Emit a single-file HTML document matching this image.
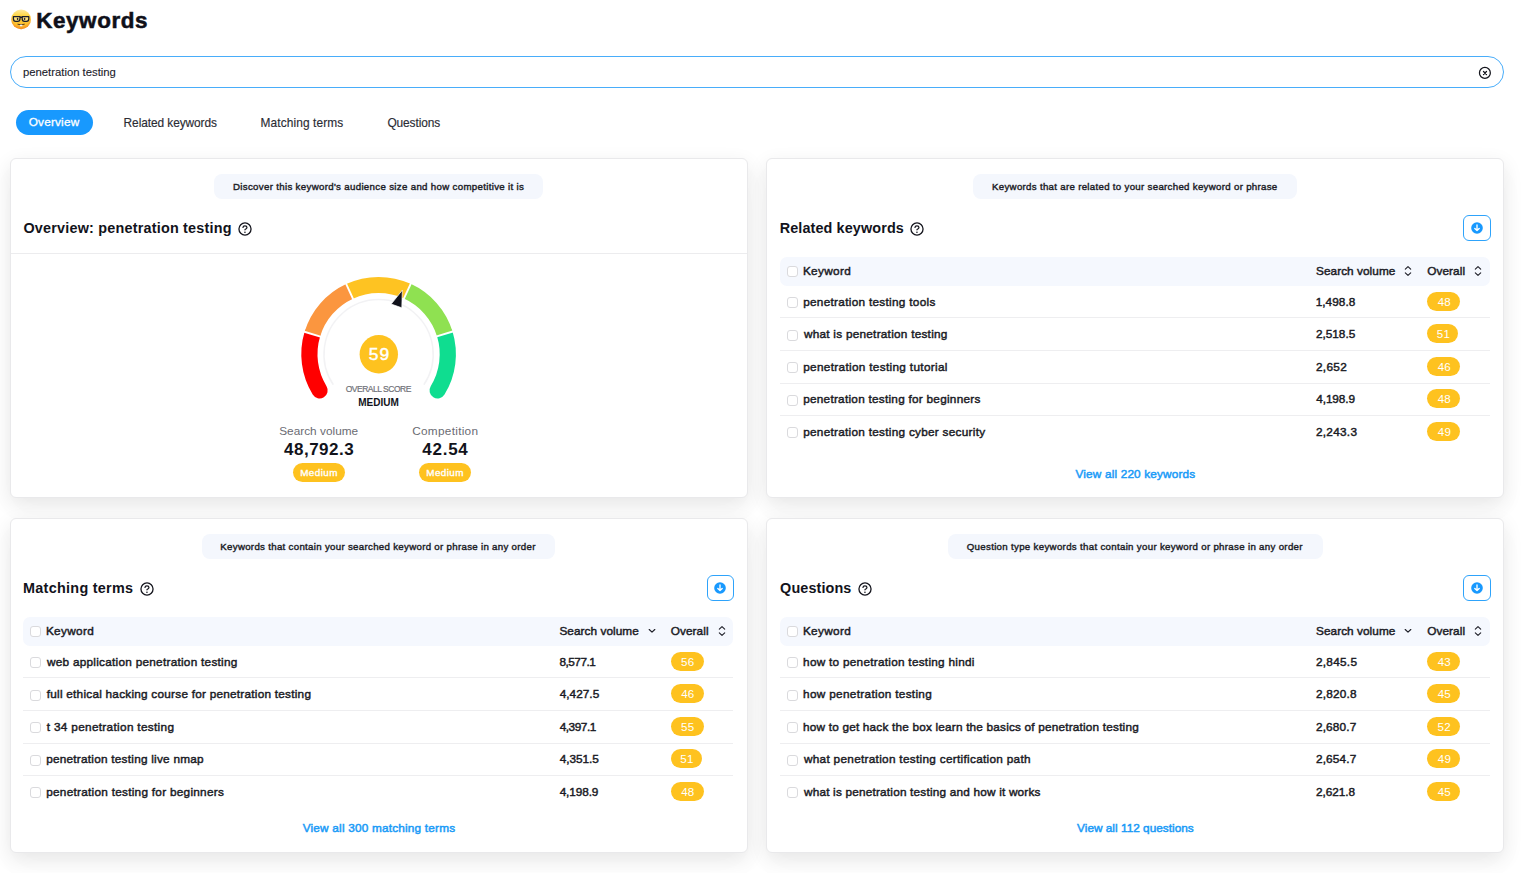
<!DOCTYPE html>
<html><head><meta charset="utf-8"><title>Keywords</title>
<style>
html,body{margin:0;padding:0;}
body{width:1536px;height:873px;overflow:hidden;background:#fff;position:relative;font-family:"Liberation Sans", sans-serif;}
.t{position:absolute;white-space:nowrap;}
.r{position:absolute;}
</style></head><body>
<svg class="r" style="left:9px;top:7px" width="24" height="24" viewBox="0 0 24 24">
<defs><linearGradient id="eg" x1="0" y1="0" x2="0" y2="1"><stop offset="0" stop-color="#ffeaa0"/><stop offset="0.3" stop-color="#ffd646"/><stop offset="0.75" stop-color="#fdbf2c"/><stop offset="1" stop-color="#f8a023"/></linearGradient>
<radialGradient id="eg2" cx="0.5" cy="0.4" r="0.6"><stop offset="0.72" stop-color="#f79a25" stop-opacity="0"/><stop offset="1" stop-color="#f4891f" stop-opacity="1"/></radialGradient></defs>
<circle cx="12.1" cy="12.4" r="9.8" fill="url(#eg)"/>
<circle cx="12.1" cy="12.4" r="9.8" fill="url(#eg2)"/>
<path d="M4.4 9.7 H11 V11.4 Q11 14.3 8.7 14.3 H6.7 Q4.4 14.3 4.4 11.4 Z M13.2 9.7 H19.8 V11.4 Q19.8 14.3 17.5 14.3 H15.5 Q13.2 14.3 13.2 11.4 Z" fill="#ffe27a" stroke="#1c1d2b" stroke-width="1.25" stroke-linejoin="round"/>
<path d="M11 10.3 H13.2" stroke="#1c1d2b" stroke-width="1.4"/>
<ellipse cx="8.6" cy="12" rx="0.8" ry="1.15" fill="#2d2a3a"/><ellipse cx="15.6" cy="12" rx="0.8" ry="1.15" fill="#2d2a3a"/>
<path d="M8.9 17.3 Q12.1 18.5 15.3 17.3" fill="none" stroke="#3d2a1c" stroke-width="0.9" stroke-linecap="round"/>
<rect x="10.9" y="17.8" width="2.5" height="1.5" rx="0.3" fill="#f2f3f6"/>
</svg>
<div class="t" style="left:36.16px;top:10.00px;font-size:22.4px;line-height:22.4px;color:#0f1019;font-weight:bold;letter-spacing:0.620px;-webkit-text-stroke:0.55px #0f1019;">Keywords</div>
<div class="r" style="left:10px;top:56.2px;width:1494px;height:31.6px;box-sizing:border-box;border:1.5px solid #49adfa;border-radius:16px;background:#fff;"></div>
<div class="t" style="left:23.02px;top:67.00px;font-size:11.3px;line-height:11.3px;color:#20212a;letter-spacing:-0.007px;-webkit-text-stroke:0.1px #20212a;">penetration testing</div>
<svg class="r" style="left:1477px;top:65px" width="16" height="16" viewBox="0 0 16 16">
<circle cx="7.9" cy="7.9" r="5.45" fill="none" stroke="#14151d" stroke-width="1.25"/>
<path d="M6.5 6.5 L9.5 9.5 M9.5 6.5 L6.5 9.5" stroke="#14151d" stroke-width="1.3" stroke-linecap="round"/><circle cx="8" cy="8" r="0.9" fill="#14151d"/></svg>
<div class="r" style="left:16.1px;top:109.8px;width:76.6px;height:25.7px;background:#1899fe;border-radius:13px;"></div>
<div class="t" style="left:28.69px;top:117.00px;font-size:11.8px;line-height:11.8px;color:#ffffff;letter-spacing:0.194px;-webkit-text-stroke:0.3px #ffffff;">Overview</div>
<div class="t" style="left:123.59px;top:118.00px;font-size:11.9px;line-height:11.9px;color:#2b2c34;letter-spacing:-0.075px;-webkit-text-stroke:0.15px #2b2c34;">Related keywords</div>
<div class="t" style="left:260.59px;top:118.00px;font-size:11.9px;line-height:11.9px;color:#2b2c34;letter-spacing:0.101px;-webkit-text-stroke:0.15px #2b2c34;">Matching terms</div>
<div class="t" style="left:387.41px;top:118.00px;font-size:11.9px;line-height:11.9px;color:#2b2c34;letter-spacing:-0.093px;-webkit-text-stroke:0.15px #2b2c34;">Questions</div>
<div class="r" style="left:10px;top:157.5px;width:738px;height:340.5px;box-sizing:border-box;border:1px solid #e9e9eb;border-radius:6px;background:#fff;box-shadow:0 6px 20px rgba(0,0,0,0.09), 0 14px 36px rgba(0,0,0,0.02);"></div>
<div class="r" style="left:766px;top:157.5px;width:738px;height:340.5px;box-sizing:border-box;border:1px solid #e9e9eb;border-radius:6px;background:#fff;box-shadow:0 6px 20px rgba(0,0,0,0.09), 0 14px 36px rgba(0,0,0,0.02);"></div>
<div class="r" style="left:10px;top:518px;width:738px;height:334.5px;box-sizing:border-box;border:1px solid #e9e9eb;border-radius:6px;background:#fff;box-shadow:0 6px 20px rgba(0,0,0,0.09), 0 14px 36px rgba(0,0,0,0.02);"></div>
<div class="r" style="left:766px;top:518px;width:738px;height:334.5px;box-sizing:border-box;border:1px solid #e9e9eb;border-radius:6px;background:#fff;box-shadow:0 6px 20px rgba(0,0,0,0.09), 0 14px 36px rgba(0,0,0,0.02);"></div>
<div class="r" style="left:214px;top:174.4px;width:329.29999999999995px;height:25px;background:#f4f7fd;border-radius:8px;"></div>
<div class="t" style="left:233.00px;top:182.00px;font-size:9.7px;line-height:9.7px;color:#1c1d27;letter-spacing:0.320px;-webkit-text-stroke:0.4px #1c1d27;">Discover this keyword's audience size and how competitive it is</div>
<div class="t" style="left:23.42px;top:221.00px;font-size:14.4px;line-height:14.4px;color:#12131b;font-weight:bold;letter-spacing:0.207px;">Overview: penetration testing</div>
<svg class="r" style="left:236.70px;top:220.80px" width="16" height="16" viewBox="0 0 16 16">
<circle cx="8" cy="8" r="6.05" fill="none" stroke="#14151d" stroke-width="1.3"/>
<path d="M6.0 6.45 C6.0 5.3 6.85 4.8 7.95 4.8 C9.1 4.8 9.95 5.4 9.95 6.4 C9.95 7.3 9.25 7.65 8.7 8.0 C8.2 8.3 7.95 8.55 7.95 8.85" fill="none" stroke="#14151d" stroke-width="1.25" stroke-linecap="round"/>
<circle cx="7.95" cy="11.2" r="0.8" fill="#14151d"/></svg>
<div class="r" style="left:10.5px;top:253px;width:736px;height:1px;background:#ececee;"></div>
<svg class="r" style="left:0;top:0" width="1536" height="873" viewBox="0 0 1536 873">
<path d="M333.33 384.73 A54.6 54.6 0 1 1 423.87 384.73" fill="none" stroke="#f2f2f4" stroke-width="1.5"/>
<path d="M319.60 390.36 A69.2 69.2 0 0 1 312.35 334.20" fill="none" stroke="#ff0000" stroke-width="16.2" stroke-linecap="round"/>
<path d="M444.78 333.97 A69.2 69.2 0 0 1 437.60 390.36" fill="none" stroke="#0fdd90" stroke-width="16.2" stroke-linecap="round"/>
<path d="M312.35 334.20 A69.2 69.2 0 0 1 349.57 291.38" fill="none" stroke="#fb963f" stroke-width="16.2"/>
<path d="M349.57 291.38 A69.2 69.2 0 0 1 407.30 291.23" fill="none" stroke="#fec322" stroke-width="16.2"/>
<path d="M407.30 291.23 A69.2 69.2 0 0 1 444.78 333.97" fill="none" stroke="#8fe151" stroke-width="16.2"/>
<path d="M322.02 337.12 L302.68 331.28" stroke="#fff" stroke-width="1.9"/>
<path d="M353.81 300.55 L345.34 282.21" stroke="#fff" stroke-width="1.9"/>
<path d="M403.11 300.42 L411.49 282.04" stroke="#fff" stroke-width="1.9"/>
<path d="M435.12 336.92 L454.43 331.01" stroke="#fff" stroke-width="1.9"/>
<path d="M402.3 290.2 L391.2 304.1 L401.8 307.8 Z" fill="#10111a" stroke="#fff" stroke-width="0.7" stroke-linejoin="round"/>
<circle cx="378.8" cy="354.3" r="19.2" fill="#fec21f"/>
</svg>
<div class="t" style="left:368.75px;top:346.00px;font-size:17.4px;line-height:17.4px;color:#ffffff;letter-spacing:1.065px;-webkit-text-stroke:0.5px #ffffff;">59</div>
<div class="t" style="left:345.70px;top:385.00px;font-size:8.5px;line-height:8.5px;color:#707178;letter-spacing:-0.485px;-webkit-text-stroke:0.2px #707178;">OVERALL SCORE</div>
<div class="t" style="left:358.32px;top:398.00px;font-size:10.0px;line-height:10.0px;color:#12131b;font-weight:bold;letter-spacing:-0.025px;">MEDIUM</div>
<div class="t" style="left:279.17px;top:426.00px;font-size:11.8px;line-height:11.8px;color:#6a6b73;letter-spacing:0.027px;">Search volume</div>
<div class="t" style="left:284.05px;top:441.00px;font-size:17.0px;line-height:17.0px;color:#12131b;font-weight:bold;letter-spacing:0.497px;">48,792.3</div>
<div class="r" style="left:292.9px;top:463.3px;width:51.9px;height:18.7px;background:#fec21f;border-radius:10px;"></div>
<div class="t" style="left:300.16px;top:468.00px;font-size:9.9px;line-height:9.9px;color:#ffffff;letter-spacing:0.423px;-webkit-text-stroke:0.35px #ffffff;">Medium</div>
<div class="t" style="left:412.21px;top:426.00px;font-size:11.8px;line-height:11.8px;color:#6a6b73;letter-spacing:0.287px;">Competition</div>
<div class="t" style="left:422.35px;top:441.00px;font-size:17.0px;line-height:17.0px;color:#12131b;font-weight:bold;letter-spacing:0.724px;">42.54</div>
<div class="r" style="left:419.4px;top:463.3px;width:51.5px;height:18.7px;background:#fec21f;border-radius:10px;"></div>
<div class="t" style="left:426.26px;top:468.00px;font-size:9.9px;line-height:9.9px;color:#ffffff;letter-spacing:0.423px;-webkit-text-stroke:0.35px #ffffff;">Medium</div>
<div class="r" style="left:973.2px;top:174.4px;width:323.5px;height:25px;background:#f4f7fd;border-radius:8px;"></div>
<div class="t" style="left:992.00px;top:182.00px;font-size:9.7px;line-height:9.7px;color:#1c1d27;letter-spacing:0.299px;-webkit-text-stroke:0.4px #1c1d27;">Keywords that are related to your searched keyword or phrase</div>
<div class="t" style="left:779.73px;top:221.00px;font-size:14.4px;line-height:14.4px;color:#12131b;font-weight:bold;letter-spacing:0.114px;">Related keywords</div>
<svg class="r" style="left:908.90px;top:220.90px" width="16" height="16" viewBox="0 0 16 16">
<circle cx="8" cy="8" r="6.05" fill="none" stroke="#14151d" stroke-width="1.3"/>
<path d="M6.0 6.45 C6.0 5.3 6.85 4.8 7.95 4.8 C9.1 4.8 9.95 5.4 9.95 6.4 C9.95 7.3 9.25 7.65 8.7 8.0 C8.2 8.3 7.95 8.55 7.95 8.85" fill="none" stroke="#14151d" stroke-width="1.25" stroke-linecap="round"/>
<circle cx="7.95" cy="11.2" r="0.8" fill="#14151d"/></svg>
<div class="r" style="left:1463.3px;top:215.2px;width:27.5px;height:25.5px;box-sizing:border-box;border:1px solid #2ea3fb;border-radius:6px;background:#fff;"></div>
<svg class="r" style="left:1471.00px;top:221.90px" width="12" height="12" viewBox="0 0 12 12">
<circle cx="6" cy="6" r="5.8" fill="#1899fe"/>
<path d="M6 3 V8.5 M3.8 6.4 L6 8.6 L8.2 6.4" fill="none" stroke="#fff" stroke-width="1.35" stroke-linecap="round" stroke-linejoin="round"/></svg>
<div class="r" style="left:779.9px;top:256.8px;width:710.1px;height:29px;background:#f5f8fe;border-radius:7px;"></div>
<div class="r" style="left:786.8px;top:266.2px;width:11px;height:11px;box-sizing:border-box;border:1px solid #dadadd;border-radius:3px;background:#fff;"></div>
<div class="t" style="left:802.95px;top:266.00px;font-size:11.8px;line-height:11.8px;color:#1a1b25;letter-spacing:0.310px;-webkit-text-stroke:0.45px #1a1b25;">Keyword</div>
<div class="t" style="left:1315.99px;top:266.00px;font-size:11.8px;line-height:11.8px;color:#1a1b25;letter-spacing:0.056px;-webkit-text-stroke:0.45px #1a1b25;">Search volume</div>
<svg class="r" style="left:1403.30px;top:264.30px" width="10" height="14" viewBox="0 0 10 14">
<path d="M2.3 5.2 L5 2.6 L7.7 5.2 M2.3 8.8 L5 11.4 L7.7 8.8" fill="none" stroke="#1d1e27" stroke-width="1.1" stroke-linecap="round" stroke-linejoin="round"/></svg>
<div class="t" style="left:1427.16px;top:266.00px;font-size:11.8px;line-height:11.8px;color:#1a1b25;letter-spacing:0.088px;-webkit-text-stroke:0.45px #1a1b25;">Overall</div>
<svg class="r" style="left:1473.10px;top:264.30px" width="10" height="14" viewBox="0 0 10 14">
<path d="M2.3 5.2 L5 2.6 L7.7 5.2 M2.3 8.8 L5 11.4 L7.7 8.8" fill="none" stroke="#1d1e27" stroke-width="1.1" stroke-linecap="round" stroke-linejoin="round"/></svg>
<div class="r" style="left:786.8px;top:297.2px;width:11px;height:11px;box-sizing:border-box;border:1px solid #dadadd;border-radius:3px;background:#fff;"></div>
<div class="t" style="left:803.16px;top:297.00px;font-size:11.8px;line-height:11.8px;color:#1a1b25;letter-spacing:0.289px;-webkit-text-stroke:0.45px #1a1b25;">penetration testing tools</div>
<div class="t" style="left:1315.64px;top:297.00px;font-size:11.8px;line-height:11.8px;color:#1a1b25;letter-spacing:0.047px;-webkit-text-stroke:0.45px #1a1b25;">1,498.8</div>
<div class="r" style="left:1427.1px;top:291.9px;width:33.0px;height:19px;background:#fec21f;border-radius:10px;"></div>
<div class="t" style="left:1437.68px;top:296.00px;font-size:11.6px;line-height:11.6px;color:#ffffff;letter-spacing:0.250px;">48</div>
<div class="r" style="left:779.9px;top:317.3px;width:710.1px;height:1px;background:#eeeef0;"></div>
<div class="r" style="left:786.8px;top:329.7px;width:11px;height:11px;box-sizing:border-box;border:1px solid #dadadd;border-radius:3px;background:#fff;"></div>
<div class="t" style="left:803.95px;top:329.00px;font-size:11.8px;line-height:11.8px;color:#1a1b25;letter-spacing:0.245px;-webkit-text-stroke:0.45px #1a1b25;">what is penetration testing</div>
<div class="t" style="left:1315.93px;top:329.00px;font-size:11.8px;line-height:11.8px;color:#1a1b25;letter-spacing:-0.007px;-webkit-text-stroke:0.45px #1a1b25;">2,518.5</div>
<div class="r" style="left:1427.1px;top:324.4px;width:31.2px;height:19px;background:#fec21f;border-radius:10px;"></div>
<div class="t" style="left:1436.71px;top:328.00px;font-size:11.6px;line-height:11.6px;color:#ffffff;letter-spacing:0.250px;">51</div>
<div class="r" style="left:779.9px;top:349.9px;width:710.1px;height:1px;background:#eeeef0;"></div>
<div class="r" style="left:786.8px;top:362.2px;width:11px;height:11px;box-sizing:border-box;border:1px solid #dadadd;border-radius:3px;background:#fff;"></div>
<div class="t" style="left:803.16px;top:362.00px;font-size:11.8px;line-height:11.8px;color:#1a1b25;letter-spacing:0.316px;-webkit-text-stroke:0.45px #1a1b25;">penetration testing tutorial</div>
<div class="t" style="left:1315.93px;top:362.00px;font-size:11.8px;line-height:11.8px;color:#1a1b25;letter-spacing:0.325px;-webkit-text-stroke:0.45px #1a1b25;">2,652</div>
<div class="r" style="left:1427.1px;top:356.9px;width:33.0px;height:19px;background:#fec21f;border-radius:10px;"></div>
<div class="t" style="left:1437.68px;top:361.00px;font-size:11.6px;line-height:11.6px;color:#ffffff;letter-spacing:0.250px;">46</div>
<div class="r" style="left:779.9px;top:382.5px;width:710.1px;height:1px;background:#eeeef0;"></div>
<div class="r" style="left:786.8px;top:394.7px;width:11px;height:11px;box-sizing:border-box;border:1px solid #dadadd;border-radius:3px;background:#fff;"></div>
<div class="t" style="left:803.16px;top:394.00px;font-size:11.8px;line-height:11.8px;color:#1a1b25;letter-spacing:0.250px;-webkit-text-stroke:0.45px #1a1b25;">penetration testing for beginners</div>
<div class="t" style="left:1316.26px;top:394.00px;font-size:11.8px;line-height:11.8px;color:#1a1b25;letter-spacing:-0.101px;-webkit-text-stroke:0.45px #1a1b25;">4,198.9</div>
<div class="r" style="left:1427.1px;top:389.4px;width:33.0px;height:19px;background:#fec21f;border-radius:10px;"></div>
<div class="t" style="left:1437.68px;top:393.00px;font-size:11.6px;line-height:11.6px;color:#ffffff;letter-spacing:0.250px;">48</div>
<div class="r" style="left:779.9px;top:415.1px;width:710.1px;height:1px;background:#eeeef0;"></div>
<div class="r" style="left:786.8px;top:427.2px;width:11px;height:11px;box-sizing:border-box;border:1px solid #dadadd;border-radius:3px;background:#fff;"></div>
<div class="t" style="left:803.16px;top:427.00px;font-size:11.8px;line-height:11.8px;color:#1a1b25;letter-spacing:0.269px;-webkit-text-stroke:0.45px #1a1b25;">penetration testing cyber security</div>
<div class="t" style="left:1315.93px;top:427.00px;font-size:11.8px;line-height:11.8px;color:#1a1b25;letter-spacing:0.281px;-webkit-text-stroke:0.45px #1a1b25;">2,243.3</div>
<div class="r" style="left:1427.1px;top:421.9px;width:33.0px;height:19px;background:#fec21f;border-radius:10px;"></div>
<div class="t" style="left:1437.69px;top:426.00px;font-size:11.6px;line-height:11.6px;color:#ffffff;letter-spacing:0.250px;">49</div>
<div class="t" style="left:1075.49px;top:469.00px;font-size:11.8px;line-height:11.8px;color:#1a9bf7;letter-spacing:0.162px;-webkit-text-stroke:0.5px #1a9bf7;">View all 220 keywords</div>
<div class="r" style="left:202.4px;top:534.4px;width:352.5px;height:25px;background:#f4f7fd;border-radius:8px;"></div>
<div class="t" style="left:220.30px;top:542.00px;font-size:9.7px;line-height:9.7px;color:#1c1d27;letter-spacing:0.300px;-webkit-text-stroke:0.4px #1c1d27;">Keywords that contain your searched keyword or phrase in any order</div>
<div class="t" style="left:23.03px;top:581.00px;font-size:14.4px;line-height:14.4px;color:#12131b;font-weight:bold;letter-spacing:0.287px;">Matching terms</div>
<svg class="r" style="left:138.70px;top:580.90px" width="16" height="16" viewBox="0 0 16 16">
<circle cx="8" cy="8" r="6.05" fill="none" stroke="#14151d" stroke-width="1.3"/>
<path d="M6.0 6.45 C6.0 5.3 6.85 4.8 7.95 4.8 C9.1 4.8 9.95 5.4 9.95 6.4 C9.95 7.3 9.25 7.65 8.7 8.0 C8.2 8.3 7.95 8.55 7.95 8.85" fill="none" stroke="#14151d" stroke-width="1.25" stroke-linecap="round"/>
<circle cx="7.95" cy="11.2" r="0.8" fill="#14151d"/></svg>
<div class="r" style="left:706.5px;top:575.2px;width:27.5px;height:25.5px;box-sizing:border-box;border:1px solid #2ea3fb;border-radius:6px;background:#fff;"></div>
<svg class="r" style="left:714.20px;top:581.90px" width="12" height="12" viewBox="0 0 12 12">
<circle cx="6" cy="6" r="5.8" fill="#1899fe"/>
<path d="M6 3 V8.5 M3.8 6.4 L6 8.6 L8.2 6.4" fill="none" stroke="#fff" stroke-width="1.35" stroke-linecap="round" stroke-linejoin="round"/></svg>
<div class="r" style="left:22.9px;top:616.8px;width:710.1px;height:29px;background:#f5f8fe;border-radius:7px;"></div>
<div class="r" style="left:29.8px;top:626.1999999999999px;width:11px;height:11px;box-sizing:border-box;border:1px solid #dadadd;border-radius:3px;background:#fff;"></div>
<div class="t" style="left:45.95px;top:626.00px;font-size:11.8px;line-height:11.8px;color:#1a1b25;letter-spacing:0.310px;-webkit-text-stroke:0.45px #1a1b25;">Keyword</div>
<div class="t" style="left:559.39px;top:626.00px;font-size:11.8px;line-height:11.8px;color:#1a1b25;letter-spacing:0.056px;-webkit-text-stroke:0.45px #1a1b25;">Search volume</div>
<svg class="r" style="left:646.70px;top:626.30px" width="10" height="10" viewBox="0 0 10 10">
<path d="M2.2 3.5 L5 6.2 L7.8 3.5" fill="none" stroke="#1d1e27" stroke-width="1.15" stroke-linecap="round" stroke-linejoin="round"/></svg>
<div class="t" style="left:670.66px;top:626.00px;font-size:11.8px;line-height:11.8px;color:#1a1b25;letter-spacing:0.088px;-webkit-text-stroke:0.45px #1a1b25;">Overall</div>
<svg class="r" style="left:716.60px;top:624.30px" width="10" height="14" viewBox="0 0 10 14">
<path d="M2.3 5.2 L5 2.6 L7.7 5.2 M2.3 8.8 L5 11.4 L7.7 8.8" fill="none" stroke="#1d1e27" stroke-width="1.1" stroke-linecap="round" stroke-linejoin="round"/></svg>
<div class="r" style="left:29.8px;top:657.2px;width:11px;height:11px;box-sizing:border-box;border:1px solid #dadadd;border-radius:3px;background:#fff;"></div>
<div class="t" style="left:46.95px;top:657.00px;font-size:11.8px;line-height:11.8px;color:#1a1b25;letter-spacing:0.257px;-webkit-text-stroke:0.45px #1a1b25;">web application penetration testing</div>
<div class="t" style="left:559.42px;top:657.00px;font-size:11.8px;line-height:11.8px;color:#1a1b25;letter-spacing:-0.490px;-webkit-text-stroke:0.45px #1a1b25;">8,577.1</div>
<div class="r" style="left:670.6px;top:651.9px;width:33.0px;height:19px;background:#fec21f;border-radius:10px;"></div>
<div class="t" style="left:681.08px;top:656.00px;font-size:11.6px;line-height:11.6px;color:#ffffff;letter-spacing:0.250px;">56</div>
<div class="r" style="left:22.9px;top:677.3px;width:710.1px;height:1px;background:#eeeef0;"></div>
<div class="r" style="left:29.8px;top:689.7px;width:11px;height:11px;box-sizing:border-box;border:1px solid #dadadd;border-radius:3px;background:#fff;"></div>
<div class="t" style="left:46.75px;top:689.00px;font-size:11.8px;line-height:11.8px;color:#1a1b25;letter-spacing:0.235px;-webkit-text-stroke:0.45px #1a1b25;">full ethical hacking course for penetration testing</div>
<div class="t" style="left:559.66px;top:689.00px;font-size:11.8px;line-height:11.8px;color:#1a1b25;letter-spacing:0.039px;-webkit-text-stroke:0.45px #1a1b25;">4,427.5</div>
<div class="r" style="left:670.6px;top:684.4px;width:33.0px;height:19px;background:#fec21f;border-radius:10px;"></div>
<div class="t" style="left:681.18px;top:688.00px;font-size:11.6px;line-height:11.6px;color:#ffffff;letter-spacing:0.250px;">46</div>
<div class="r" style="left:22.9px;top:709.9px;width:710.1px;height:1px;background:#eeeef0;"></div>
<div class="r" style="left:29.8px;top:722.2px;width:11px;height:11px;box-sizing:border-box;border:1px solid #dadadd;border-radius:3px;background:#fff;"></div>
<div class="t" style="left:46.75px;top:722.00px;font-size:11.8px;line-height:11.8px;color:#1a1b25;letter-spacing:0.314px;-webkit-text-stroke:0.45px #1a1b25;">t 34 penetration testing</div>
<div class="t" style="left:559.66px;top:722.00px;font-size:11.8px;line-height:11.8px;color:#1a1b25;letter-spacing:-0.446px;-webkit-text-stroke:0.45px #1a1b25;">4,397.1</div>
<div class="r" style="left:670.6px;top:716.9px;width:33.0px;height:19px;background:#fec21f;border-radius:10px;"></div>
<div class="t" style="left:681.06px;top:721.00px;font-size:11.6px;line-height:11.6px;color:#ffffff;letter-spacing:0.250px;">55</div>
<div class="r" style="left:22.9px;top:742.5px;width:710.1px;height:1px;background:#eeeef0;"></div>
<div class="r" style="left:29.8px;top:754.7px;width:11px;height:11px;box-sizing:border-box;border:1px solid #dadadd;border-radius:3px;background:#fff;"></div>
<div class="t" style="left:46.16px;top:754.00px;font-size:11.8px;line-height:11.8px;color:#1a1b25;letter-spacing:0.237px;-webkit-text-stroke:0.45px #1a1b25;">penetration testing live nmap</div>
<div class="t" style="left:559.66px;top:754.00px;font-size:11.8px;line-height:11.8px;color:#1a1b25;letter-spacing:-0.044px;-webkit-text-stroke:0.45px #1a1b25;">4,351.5</div>
<div class="r" style="left:670.6px;top:749.4px;width:31.2px;height:19px;background:#fec21f;border-radius:10px;"></div>
<div class="t" style="left:680.21px;top:753.00px;font-size:11.6px;line-height:11.6px;color:#ffffff;letter-spacing:0.250px;">51</div>
<div class="r" style="left:22.9px;top:775.1px;width:710.1px;height:1px;background:#eeeef0;"></div>
<div class="r" style="left:29.8px;top:787.2px;width:11px;height:11px;box-sizing:border-box;border:1px solid #dadadd;border-radius:3px;background:#fff;"></div>
<div class="t" style="left:46.16px;top:787.00px;font-size:11.8px;line-height:11.8px;color:#1a1b25;letter-spacing:0.265px;-webkit-text-stroke:0.45px #1a1b25;">penetration testing for beginners</div>
<div class="t" style="left:559.66px;top:787.00px;font-size:11.8px;line-height:11.8px;color:#1a1b25;letter-spacing:-0.101px;-webkit-text-stroke:0.45px #1a1b25;">4,198.9</div>
<div class="r" style="left:670.6px;top:781.9px;width:33.0px;height:19px;background:#fec21f;border-radius:10px;"></div>
<div class="t" style="left:681.18px;top:786.00px;font-size:11.6px;line-height:11.6px;color:#ffffff;letter-spacing:0.250px;">48</div>
<div class="t" style="left:302.69px;top:823.00px;font-size:11.8px;line-height:11.8px;color:#1a9bf7;letter-spacing:0.197px;-webkit-text-stroke:0.5px #1a9bf7;">View all 300 matching terms</div>
<div class="r" style="left:948px;top:534.4px;width:374.5px;height:25px;background:#f4f7fd;border-radius:8px;"></div>
<div class="t" style="left:966.74px;top:542.00px;font-size:9.7px;line-height:9.7px;color:#1c1d27;letter-spacing:0.312px;-webkit-text-stroke:0.4px #1c1d27;">Question type keywords that contain your keyword or phrase in any order</div>
<div class="t" style="left:780.12px;top:581.00px;font-size:14.4px;line-height:14.4px;color:#12131b;font-weight:bold;letter-spacing:0.109px;">Questions</div>
<svg class="r" style="left:856.80px;top:580.90px" width="16" height="16" viewBox="0 0 16 16">
<circle cx="8" cy="8" r="6.05" fill="none" stroke="#14151d" stroke-width="1.3"/>
<path d="M6.0 6.45 C6.0 5.3 6.85 4.8 7.95 4.8 C9.1 4.8 9.95 5.4 9.95 6.4 C9.95 7.3 9.25 7.65 8.7 8.0 C8.2 8.3 7.95 8.55 7.95 8.85" fill="none" stroke="#14151d" stroke-width="1.25" stroke-linecap="round"/>
<circle cx="7.95" cy="11.2" r="0.8" fill="#14151d"/></svg>
<div class="r" style="left:1463.3px;top:575.2px;width:27.5px;height:25.5px;box-sizing:border-box;border:1px solid #2ea3fb;border-radius:6px;background:#fff;"></div>
<svg class="r" style="left:1471.00px;top:581.90px" width="12" height="12" viewBox="0 0 12 12">
<circle cx="6" cy="6" r="5.8" fill="#1899fe"/>
<path d="M6 3 V8.5 M3.8 6.4 L6 8.6 L8.2 6.4" fill="none" stroke="#fff" stroke-width="1.35" stroke-linecap="round" stroke-linejoin="round"/></svg>
<div class="r" style="left:779.9px;top:616.8px;width:710.1px;height:29px;background:#f5f8fe;border-radius:7px;"></div>
<div class="r" style="left:786.8px;top:626.1999999999999px;width:11px;height:11px;box-sizing:border-box;border:1px solid #dadadd;border-radius:3px;background:#fff;"></div>
<div class="t" style="left:802.95px;top:626.00px;font-size:11.8px;line-height:11.8px;color:#1a1b25;letter-spacing:0.310px;-webkit-text-stroke:0.45px #1a1b25;">Keyword</div>
<div class="t" style="left:1315.99px;top:626.00px;font-size:11.8px;line-height:11.8px;color:#1a1b25;letter-spacing:0.056px;-webkit-text-stroke:0.45px #1a1b25;">Search volume</div>
<svg class="r" style="left:1403.30px;top:626.30px" width="10" height="10" viewBox="0 0 10 10">
<path d="M2.2 3.5 L5 6.2 L7.8 3.5" fill="none" stroke="#1d1e27" stroke-width="1.15" stroke-linecap="round" stroke-linejoin="round"/></svg>
<div class="t" style="left:1427.16px;top:626.00px;font-size:11.8px;line-height:11.8px;color:#1a1b25;letter-spacing:0.088px;-webkit-text-stroke:0.45px #1a1b25;">Overall</div>
<svg class="r" style="left:1473.10px;top:624.30px" width="10" height="14" viewBox="0 0 10 14">
<path d="M2.3 5.2 L5 2.6 L7.7 5.2 M2.3 8.8 L5 11.4 L7.7 8.8" fill="none" stroke="#1d1e27" stroke-width="1.1" stroke-linecap="round" stroke-linejoin="round"/></svg>
<div class="r" style="left:786.8px;top:657.2px;width:11px;height:11px;box-sizing:border-box;border:1px solid #dadadd;border-radius:3px;background:#fff;"></div>
<div class="t" style="left:803.10px;top:657.00px;font-size:11.8px;line-height:11.8px;color:#1a1b25;letter-spacing:0.259px;-webkit-text-stroke:0.45px #1a1b25;">how to penetration testing hindi</div>
<div class="t" style="left:1315.93px;top:657.00px;font-size:11.8px;line-height:11.8px;color:#1a1b25;letter-spacing:0.277px;-webkit-text-stroke:0.45px #1a1b25;">2,845.5</div>
<div class="r" style="left:1427.1px;top:651.9px;width:33.0px;height:19px;background:#fec21f;border-radius:10px;"></div>
<div class="t" style="left:1437.68px;top:656.00px;font-size:11.6px;line-height:11.6px;color:#ffffff;letter-spacing:0.250px;">43</div>
<div class="r" style="left:779.9px;top:677.3px;width:710.1px;height:1px;background:#eeeef0;"></div>
<div class="r" style="left:786.8px;top:689.7px;width:11px;height:11px;box-sizing:border-box;border:1px solid #dadadd;border-radius:3px;background:#fff;"></div>
<div class="t" style="left:803.10px;top:689.00px;font-size:11.8px;line-height:11.8px;color:#1a1b25;letter-spacing:0.305px;-webkit-text-stroke:0.45px #1a1b25;">how penetration testing</div>
<div class="t" style="left:1315.93px;top:689.00px;font-size:11.8px;line-height:11.8px;color:#1a1b25;letter-spacing:0.231px;-webkit-text-stroke:0.45px #1a1b25;">2,820.8</div>
<div class="r" style="left:1427.1px;top:684.4px;width:33.0px;height:19px;background:#fec21f;border-radius:10px;"></div>
<div class="t" style="left:1437.66px;top:688.00px;font-size:11.6px;line-height:11.6px;color:#ffffff;letter-spacing:0.250px;">45</div>
<div class="r" style="left:779.9px;top:709.9px;width:710.1px;height:1px;background:#eeeef0;"></div>
<div class="r" style="left:786.8px;top:722.2px;width:11px;height:11px;box-sizing:border-box;border:1px solid #dadadd;border-radius:3px;background:#fff;"></div>
<div class="t" style="left:803.10px;top:722.00px;font-size:11.8px;line-height:11.8px;color:#1a1b25;letter-spacing:0.188px;-webkit-text-stroke:0.45px #1a1b25;">how to get hack the box learn the basics of penetration testing</div>
<div class="t" style="left:1315.93px;top:722.00px;font-size:11.8px;line-height:11.8px;color:#1a1b25;letter-spacing:0.180px;-webkit-text-stroke:0.45px #1a1b25;">2,680.7</div>
<div class="r" style="left:1427.1px;top:716.9px;width:33.0px;height:19px;background:#fec21f;border-radius:10px;"></div>
<div class="t" style="left:1437.62px;top:721.00px;font-size:11.6px;line-height:11.6px;color:#ffffff;letter-spacing:0.250px;">52</div>
<div class="r" style="left:779.9px;top:742.5px;width:710.1px;height:1px;background:#eeeef0;"></div>
<div class="r" style="left:786.8px;top:754.7px;width:11px;height:11px;box-sizing:border-box;border:1px solid #dadadd;border-radius:3px;background:#fff;"></div>
<div class="t" style="left:803.95px;top:754.00px;font-size:11.8px;line-height:11.8px;color:#1a1b25;letter-spacing:0.290px;-webkit-text-stroke:0.45px #1a1b25;">what penetration testing certification path</div>
<div class="t" style="left:1315.93px;top:754.00px;font-size:11.8px;line-height:11.8px;color:#1a1b25;letter-spacing:0.180px;-webkit-text-stroke:0.45px #1a1b25;">2,654.7</div>
<div class="r" style="left:1427.1px;top:749.4px;width:33.0px;height:19px;background:#fec21f;border-radius:10px;"></div>
<div class="t" style="left:1437.69px;top:753.00px;font-size:11.6px;line-height:11.6px;color:#ffffff;letter-spacing:0.250px;">49</div>
<div class="r" style="left:779.9px;top:775.1px;width:710.1px;height:1px;background:#eeeef0;"></div>
<div class="r" style="left:786.8px;top:787.2px;width:11px;height:11px;box-sizing:border-box;border:1px solid #dadadd;border-radius:3px;background:#fff;"></div>
<div class="t" style="left:803.95px;top:787.00px;font-size:11.8px;line-height:11.8px;color:#1a1b25;letter-spacing:0.194px;-webkit-text-stroke:0.45px #1a1b25;">what is penetration testing and how it works</div>
<div class="t" style="left:1315.93px;top:787.00px;font-size:11.8px;line-height:11.8px;color:#1a1b25;letter-spacing:-0.052px;-webkit-text-stroke:0.45px #1a1b25;">2,621.8</div>
<div class="r" style="left:1427.1px;top:781.9px;width:33.0px;height:19px;background:#fec21f;border-radius:10px;"></div>
<div class="t" style="left:1437.66px;top:786.00px;font-size:11.6px;line-height:11.6px;color:#ffffff;letter-spacing:0.250px;">45</div>
<div class="t" style="left:1077.09px;top:823.00px;font-size:11.8px;line-height:11.8px;color:#1a9bf7;letter-spacing:0.015px;-webkit-text-stroke:0.5px #1a9bf7;">View all 112 questions</div>
</body></html>
